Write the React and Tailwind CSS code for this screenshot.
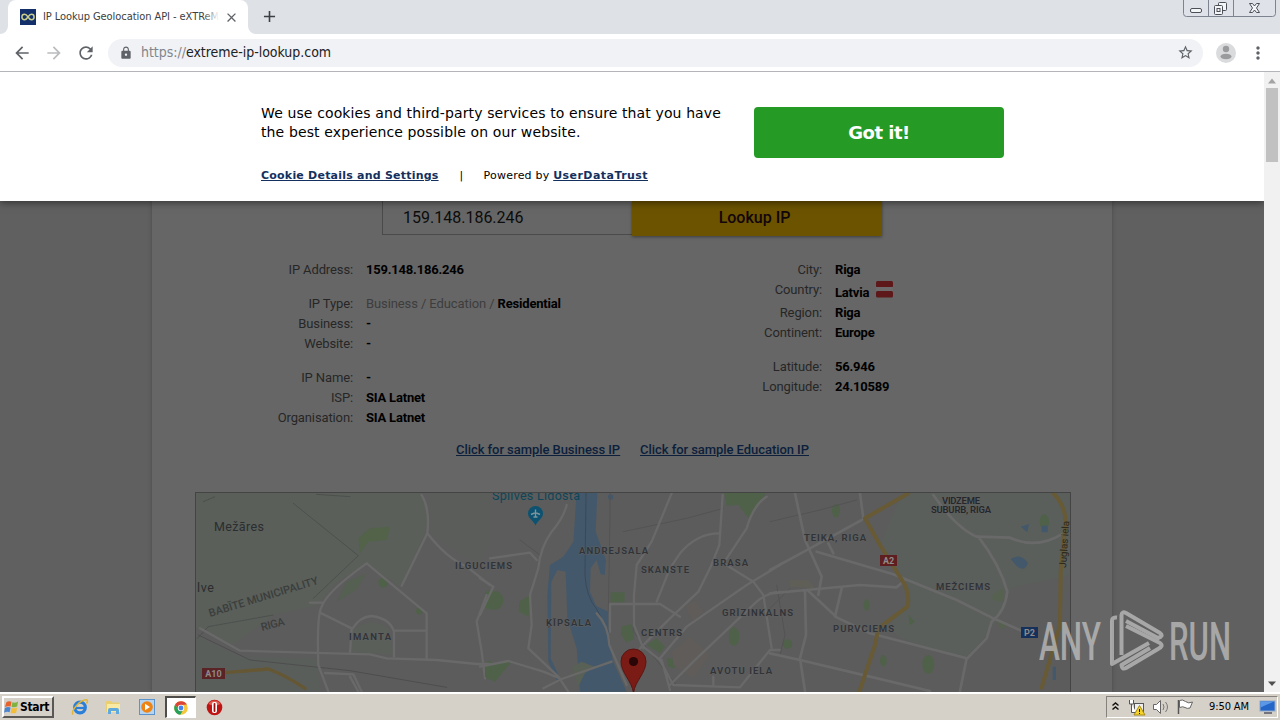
import { MdAdd, MdArrowBack, MdArrowForward, MdClose, MdLock, MdMoreVert, MdRefresh, MdStarBorder } from "react-icons/md"

const leftGroups = [
    [{ label: "IP Address:", value: "159.148.186.246" }],
    [
        { label: "IP Type:", muted: "Business / Education / ", value: "Residential" },
        { label: "Business:", value: "-" },
        { label: "Website:", value: "-" },
    ],
    [
        { label: "IP Name:", value: "-" },
        { label: "ISP:", value: "SIA Latnet" },
        { label: "Organisation:", value: "SIA Latnet" },
    ],
]

const rightGroups = [
    [
        { label: "City:", value: "Riga" },
        { label: "Country:", value: "Latvia", flag: true },
        { label: "Region:", value: "Riga" },
        { label: "Continent:", value: "Europe" },
    ],
    [
        { label: "Latitude:", value: "56.946" },
        { label: "Longitude:", value: "24.10589" },
    ],
]

const WindowControls = () => (
    <svg width="93" height="18" viewBox="1183 0 93 18" fill="none" stroke="#7d838f">
        <path d="M1183.500 0V13.500Q1183.500 16.500 1186.500 16.500H1272.500Q1275.500 16.500 1275.500 13.500V0" fill="#dfe2e8" />
        <path d="M1208.500 0V16M1233.500 0V16" />
        <g stroke="#4b4f58" fill="#f4f5f7">
            <rect x="1190.500" y="8.500" width="11" height="4" rx="1.500" />
            <rect x="1218.500" y="2.500" width="8" height="8" rx="1" />
            <rect x="1214.500" y="5.500" width="8" height="9" rx="1" />
            <rect x="1217" y="8.500" width="3" height="3" />
            <path d="M1249.500 3.500h3l2 2.500 2-2.500h3l-3 4.500 3 4.500h-3l-2-2.500-2 2.500h-3l3-4.500z" />
        </g>
    </svg>
)

const TabStrip = () => (
    <div className="flex h-[34px] items-start justify-between bg-[#dee1e6]">
        <div className="flex h-full items-end">
            <div className="h-2 w-2 bg-white">
                <div className="h-2 w-2 rounded-br-lg bg-[#dee1e6]" />
            </div>
            <div className="flex h-full w-60 items-center rounded-t-lg bg-white pl-3">
                <svg width="16" height="16" viewBox="0 0 16 16">
                    <rect width="16" height="16" fill="#14306b" />
                    <path d="M8 8C6.500 5.700 5.500 5.300 4.600 5.300a2.700 2.700 0 0 0 0 5.400C5.500 10.700 6.500 10.300 8 8s2.500-2.700 3.400-2.700a2.700 2.700 0 0 1 0 5.400C10.500 10.700 9.500 10.300 8 8z" fill="none" stroke="#c9cf8a" strokeWidth="1.500" />
                </svg>
                <div className="relative ml-[7px] w-[176px] overflow-hidden whitespace-nowrap font-['DejaVu_Sans_Condensed','DejaVu_Sans',sans-serif] text-[11px] leading-4 tracking-[-0.06px] text-[#3c4043]">
                    IP Lookup Geolocation API - eXTReM
                    <div className="absolute inset-y-0 right-0 w-4 bg-linear-to-r from-transparent to-white" />
                </div>
                <MdClose className="ml-[5px] size-[15px] text-[#5f6368]" />
            </div>
            <div className="h-2 w-2 bg-white">
                <div className="h-2 w-2 rounded-bl-lg bg-[#dee1e6]" />
            </div>
            <MdAdd className="mb-[8px] ml-[4px] size-[19px] text-[#3c4043]" />
        </div>
        <div className="pr-1">
            <WindowControls />
        </div>
    </div>
)

const Toolbar = () => (
    <div className="flex h-[38px] items-center border-b border-[#b3b5b8] bg-white">
        <MdArrowBack className="ml-3 size-5 text-[#5f6368]" />
        <MdArrowForward className="ml-3 size-5 text-[#babcbe]" />
        <MdRefresh className="ml-3 size-5 text-[#5f6368]" />
        <div className="ml-3 flex h-7 w-[1095px] items-center rounded-full bg-[#f0f2f5] pr-[9px] pl-[11px]">
            <MdLock className="size-[14px] text-[#5f6368]" />
            <div className="ml-2 flex-1 whitespace-nowrap font-['DejaVu_Sans_Condensed','DejaVu_Sans',sans-serif] text-[14px] tracking-[-0.03px] text-[#202124]">
                <span className="text-[#80868b]">https://</span>extreme-ip-lookup.com
            </div>
            <MdStarBorder className="size-[17px] text-[#5f6368]" />
        </div>
        <svg className="ml-[13px]" width="20" height="20" viewBox="0 0 20 20">
            <circle cx="10" cy="10" r="10" fill="#dadbdd" />
            <circle cx="10" cy="6" r="3.200" fill="#9a9b9d" />
            <ellipse cx="10" cy="13.500" rx="5.500" ry="2.800" fill="#9a9b9d" />
        </svg>
        <MdMoreVert className="ml-3 size-5 text-[#5f6368]" />
    </div>
)

const CookieBanner = () => (
    <div className="relative z-10 flex h-[129px] shrink-0 bg-white pl-[261px] font-['DejaVu_Sans',sans-serif] text-black shadow-[0_1px_8px_rgba(0,0,0,0.55)]">
        <div className="w-[493px] whitespace-nowrap pt-8">
            <p className="text-[14px] leading-[19px] tracking-[0.12px]">
                We use cookies and third-party services to ensure that you have
                <br />
                the best experience possible on our website.
            </p>
            <div className="mt-[26px] flex text-[11px] leading-4 tracking-[0.22px]">
                <a className="font-bold text-[#14305e] underline">Cookie Details and Settings</a>
                <span className="ml-[21px]">|</span>
                <span className="ml-5">
                    Powered by <a className="font-bold tracking-[0.45px] text-[#14305e] underline">UserDataTrust</a>
                </span>
            </div>
        </div>
        <button type="button" className="mt-[35px] h-[51px] w-[250px] rounded-[4px] bg-[#259a25] text-[18px] font-bold tracking-[-0.5px] text-white">
            Got it!
        </button>
    </div>
)

const Row = ({ label, value, muted, flag }) => (
    <div className="flex gap-[13px]">
        <span className="w-[93px] text-right tracking-[-0.12px] text-[#262626]">{label}</span>
        <span className="flex whitespace-pre font-bold tracking-[-0.2px] text-black">
            {muted && <span className="font-normal tracking-[-0.1px] text-[#3d3d3d]">{muted}</span>}
            {flag ? <span className="pt-[3px]">{value}</span> : value}
            {flag && (
                <svg className="mt-px ml-[7px]" width="17" height="17" viewBox="0 0 17 17">
                    <rect width="17" height="6.500" rx="1.500" fill="#5e1819" />
                    <rect y="10" width="17" height="6.500" rx="1.500" fill="#5e1819" />
                    <rect y="6" width="17" height="4" fill="#6c6a6a" />
                </svg>
            )}
        </span>
    </div>
)

const Groups = ({ groups }) => (
    <div className="flex flex-col gap-[14px]">
        {groups.map((rows, i) => (
            <div key={i}>
                {rows.map((row) => <Row key={row.label} {...row} />)}
            </div>
        ))}
    </div>
)

// Each tile is drawn at three units per pixel.
const CityMap = () => (
    <svg width="874" height="199" viewBox="196 493 874 199" className="font-['Roboto',sans-serif]">
        <rect x="196" y="493" width="874" height="199" fill="#5c5c5c" />
        <g transform="translate(190 485) scale(.33333)" fill="none" strokeLinecap="round" strokeLinejoin="round">
            <path d="M18 22H690L715 75 705 145 630 305 530 235 430 300 385 360 250 390 130 480 18 430z" fill="#5a5f5a" />
            <path d="M18 450L150 515 380 520 390 620H18z" fill="#5a5e5b" />
            <path d="M720 22H900V180L860 240 715 145z" fill="#5b5d5b" />
            <path d="M505 160l35-30 60-5-10 40-55 5-25 35z" fill="#526349" />
            <path d="M440 350l30-60 60-25-30 50z" fill="#556052" />
            <circle cx="580" cy="293" r="15" fill="#50614a" />
            <circle cx="688" cy="378" r="10" fill="#50614a" />
            <path d="M485 500V440q50-50 110-10l15 80z" fill="#5a5f5a" />
            <ellipse cx="897" cy="345" rx="14" ry="30" fill="#4e6348" />
            <ellipse cx="897" cy="555" rx="14" ry="28" fill="#4e6348" />
            <path d="M310 55L505 212 370 340M22 460L55 425 250 390M40 50L75 35M380 28L480 35" stroke="#464646" strokeWidth="2" strokeDasharray="5 3" />
            <path d="M25 450L180 525 480 557 770 607" stroke="#4d4d4d" strokeWidth="3" />
            <g stroke="#696969" strokeWidth="7">
                <path d="M695 30Q720 70 712 145L635 302M712 145Q770 220 830 245L900 300M890 330L860 410 875 500 885 580" />
                <path d="M530 235Q410 320 395 365 380 390 385 540L415 620M530 235L710 385V522M360 353H397M390 383L485 430 480 505" />
                <path d="M488 430Q510 395 545 393 600 400 612 440V515M615 437H710" />
                <path d="M30 430L150 497 540 508 590 520 740 525 860 537H900M405 564L490 568 515 620M480 575L505 620" />
            </g>
            <path d="M105 563L235 552Q285 570 345 610" stroke="#655733" strokeWidth="10" />
        </g>

        <g transform="translate(480 485) scale(.33333)" fill="none" strokeLinecap="round" strokeLinejoin="round">
            <path d="M290 22H352L347 140 378 225 374 270 362 268 350 225 332 250 330 320 348 362 385 380V430L398 525 440 620H300L290 490 262 400 257 260 232 255 214 290 212 520 245 590 232 590 205 530 202 330 210 240 250 215 280 170z" fill="#43586b" />
            <circle cx="392" cy="36" r="8" fill="#43586b" />
            <path d="M318 22L315 270Q318 335 350 372L385 440" stroke="#39495a" strokeWidth="3" />
            <g fill="#4f6149">
                <path d="M732 22H860L805 98 775 60 740 62z" />
                <ellipse cx="45" cy="346" rx="25" ry="28" />
                <path d="M118 350l32-20-4 65-30-15z" />
                <path d="M392 322h42v30h-42z" />
                <path d="M425 425l30-8 8 45-25 10-15-25z" />
                <path d="M500 480l30-20 25 25-15 20z" />
                <path d="M560 520h25v30l-20-5z" />
                <path d="M15 540l80-10-50 60-30-15z" />
                <ellipse cx="762" cy="455" rx="16" ry="28" />
                <path d="M275 545l30-15 40 15-30 20-20 40z" fill="#596055" />
            </g>
            <path d="M575 500l55-45 60 55-50 70-60-40z" fill="#5f5c59" />
            <path d="M615 365l30-20 25 35-30 30z" fill="#5f5c5a" />
            <path d="M390 22V100L385 380M430 140L620 100 730 70M120 165L180 210M460 400V440L590 600" stroke="#535353" strokeWidth="3" />
            <g stroke="#696969" strokeWidth="7">
                <path d="M260 60Q250 100 215 140 180 190 175 250L150 330 155 420 145 490 235 575 265 620M30 220L150 203 170 225M0 280L40 305 0 390M0 545L85 528 190 560 240 580" />
                <path d="M190 610L245 582 395 530M350 385Q385 420 388 480L440 600M390 440V357H540L600 395" />
                <path d="M575 25L515 170 470 240 462 330V420L490 490M728 30L718 180 690 250 655 320 570 400 480 490" />
                <path d="M718 145Q650 145 600 205L570 250 530 350M860 35Q820 60 800 130L730 235 820 290 850 330 875 490M900 240L800 300 620 425 540 520" />
                <path d="M900 320Q860 325 830 350L640 530 570 600M490 485L540 525 580 600 780 607 870 495H900M545 525L570 615M700 575V605" />
            </g>
        </g>

        <g transform="translate(770 485) scale(.33333)" fill="none" strokeLinecap="round" strokeLinejoin="round">
            <path d="M415 22H903V270L720 310 700 380 650 450 590 520 420 470 345 430 412 365 405 300 370 240 330 180 380 60z" fill="#5a5f5b" />
            <g fill="#4f6149">
                <ellipse cx="198" cy="77" rx="12" ry="20" />
                <ellipse cx="823" cy="110" rx="14" ry="22" />
                <ellipse cx="290" cy="360" rx="9" ry="17" />
                <path d="M415 390l20 20-15 10z" />
                <ellipse cx="475" cy="538" rx="18" ry="28" />
                <ellipse cx="340" cy="527" rx="10" ry="17" />
                <circle cx="53" cy="477" r="14" />
                <path d="M668 330l30-20 5 40-35-5zM675 400l45 15-25 20z" fill="#56624f" />
            </g>
            <path d="M722 222q30-20 52 12-10 30-35 8zM752 125l25-8-5 25zM815 122h18v20h-18zM848 545h10v40h-10z" fill="#43586b" />
            <path d="M60 285h55l20 25-75-5z" fill="#605f57" />
            <path d="M0 110L150 75 260 45M20 300L45 450 30 510M0 370L60 310" stroke="#535353" strokeWidth="3" />
            <g stroke="#696969" strokeWidth="8">
                <path d="M75 25L105 165 155 275 145 330M0 255L120 190 275 105M270 25L280 100M140 200L370 268 560 345 670 400 760 440M175 175L190 205" />
                <path d="M0 325L110 315 270 300 380 307 405 285M105 320L108 450 90 520 105 618M112 315L200 397 300 445 590 520 570 618M215 310L195 395" />
                <path d="M0 505L90 525 300 575 480 618M490 30Q560 130 620 155L720 158Q800 195 880 145M625 155Q690 240 712 320 705 380 665 410L650 460 592 520" />
            </g>
            <path d="M415 25L285 100 330 180 405 300Q420 340 412 365L325 430 315 480 268 620" stroke="#675a35" strokeWidth="12" />
            <path d="M850 25Q885 60 887 110L872 260 870 420 815 608" stroke="#675a35" strokeWidth="12" />
        </g>

        <g fontSize="9.500" fontWeight="600" fill="#303338" stroke="#606060" strokeWidth="1" paintOrder="stroke">
            <text x="455" y="569" textLength="57">ILGUCIEMS</text>
            <text x="349" y="639.500" textLength="42">IMANTA</text>
            <text x="579" y="554" textLength="69">ANDREJSALA</text>
            <text x="641" y="573" textLength="48">SKANSTE</text>
            <text x="713" y="566" textLength="35">BRASA</text>
            <text x="722" y="616" textLength="71">GRĪZINKALNS</text>
            <text x="546" y="625.500" textLength="45">ĶĪPSALA</text>
            <text x="641" y="636" textLength="41">CENTRS</text>
            <text x="710" y="674" textLength="62">AVOTU IELA</text>
            <text x="804" y="541" textLength="62">TEIKA, RIGA</text>
            <text x="833" y="632" textLength="61">PURVCIEMS</text>
            <text x="936" y="590" textLength="54">MEŽCIEMS</text>
            <text x="942" y="504" textLength="38" fill="#25272b">VIDZEME</text>
            <text x="931" y="513" textLength="60" fill="#25272b">SUBURB, RIGA</text>
        </g>
        <g fill="#2b2d2f" fontSize="12.500">
            <text x="214" y="531" textLength="50">Mežāres</text>
            <text x="197" y="592" textLength="17">lve</text>
            <text x="492" y="499.500" fill="#0d4658" textLength="88">Spilves Lidosta</text>
            <text transform="translate(210 617) rotate(-17)" fontSize="11" fill="#3b3e3c" fontWeight="500" textLength="114">BABĪTE MUNICIPALITY</text>
            <text transform="translate(262 631) rotate(-15)" fontSize="11" fill="#3b3e3c" fontWeight="500" textLength="24">RIGA</text>
            <text transform="translate(1066 568) rotate(-86)" fontSize="10" fill="#2c281c" textLength="47">Juglas iela</text>
        </g>
        <g fontSize="9" fontWeight="700" fill="#8f8a8a" textAnchor="middle">
            <rect x="202" y="668" width="23" height="11" fill="#5a2426" />
            <text x="213.500" y="677">A10</text>
            <rect x="880" y="555" width="17" height="11" fill="#5f1f20" />
            <text x="888.500" y="564">A2</text>
            <rect x="1021" y="627" width="17" height="11" fill="#15305a" />
            <text x="1029.500" y="636">P2</text>
        </g>
        <path d="M535.500 525.500C533 520 528 518.500 528 513.500a7.500 7.500 0 0 1 15 0C543 518.500 538 520 535.500 525.500z" fill="#0d5270" />
        <path d="M535.500 509.500v8M531 514.500l4.500-2 4.500 2M533.500 517h4" stroke="#7d959e" strokeWidth="1.400" fill="none" />
        <path d="M633.500 693C632 681 621 673 621 661.500a12.500 12.500 0 0 1 25 0C646 673 635 681 633.500 693z" fill="#7b1b16" stroke="#5c1411" />
        <circle cx="633.500" cy="661.500" r="4.600" fill="#2a0706" />
    </svg>
)

const Watermark = () => (
    <svg className="absolute top-[536px] left-[1034px] z-20 opacity-70" width="202" height="68" viewBox="1034 608 202 68" fill="#c6c6c6">
        <text x="1039" y="660" fontSize="53" fontWeight="500" textLength="62" lengthAdjust="spacingAndGlyphs" className="font-['Roboto',sans-serif]">ANY</text>
        <text x="1169" y="660" fontSize="53" fontWeight="500" textLength="62" lengthAdjust="spacingAndGlyphs" className="font-['Roboto',sans-serif]">RUN</text>
        <g fill="none" stroke="#c6c6c6" strokeWidth="4" strokeLinejoin="round" strokeLinecap="butt">
            <path d="M1117 617.500Q1112 617 1112 621V664L1149 643" />
            <path d="M1121.500 655V615Q1122 611 1126 613L1160 633Q1164 636 1158 638L1126 621" />
            <path d="M1126 626L1160 643Q1164 646 1158 649L1126 668Q1122 670 1121.500 665L1150 648" />
        </g>
    </svg>
)

const PageContent = () => (
    <div className="flex min-h-0 flex-1 justify-center bg-[#606060] font-['Roboto',sans-serif]">
        <div className="flex w-[960px] flex-col items-center overflow-hidden bg-[#666] shadow-[0_0_4px_rgba(0,0,0,0.25)]">
            <div className="flex h-[35px] w-[500px] shrink-0 text-[16px] leading-[34px]">
                <div className="h-[34px] w-[250px] border-b border-l border-[#4a4a4a] pl-5 text-[#0c0c0c]">159.148.186.246</div>
                <div className="flex-1 bg-[#6b5300] pr-[5px] text-center font-medium text-[#12060c] shadow-[0_1px_3px_rgba(0,0,0,0.4)]">Lookup IP</div>
            </div>
            <div className="mt-6 flex h-[158px] w-full shrink-0 pl-[108px] text-[13px] leading-5">
                <div className="w-[469px]">
                    <Groups groups={leftGroups} />
                </div>
                <Groups groups={rightGroups} />
            </div>
            <div className="mt-[22px] flex w-full shrink-0 gap-5 pl-[304px] text-[13px] leading-5 font-medium tracking-[-0.06px] text-[#0c1f3c] underline">
                <a>Click for sample Business IP</a>
                <a>Click for sample Education IP</a>
            </div>
            <div className="mt-8 ml-[2px] w-[876px] shrink-0 border border-[#444]">
                <CityMap />
            </div>
        </div>
    </div>
)

const Scrollbar = () => (
    <div className="flex w-4 flex-col items-center justify-between bg-[#f1f1f1]">
        <div className="flex flex-col items-center">
            <svg width="16" height="16"><path d="M4 11.500L8 6.500l4 5z" fill="#a3a3a3" /></svg>
            <div className="h-[74px] w-3 bg-[#c1c1c1]" />
        </div>
        <svg width="16" height="16"><path d="M4 5.500h8l-4 4.500z" fill="#505050" /></svg>
    </div>
)

const StartLogo = () => (
    <svg className="shrink-0" width="15" height="16" viewBox="0 0 16 16">
        <path d="M2.500 3Q5 1 8 2.500L7 7.500Q4 6.500 1 8z" fill="#e8622c" />
        <path d="M9 3Q12 4 15 2L14 7.500Q11 9 8 7.800z" fill="#7fb240" />
        <path d="M1 9Q4 7.500 7 8.500L6 13.500Q3 12.500 0 14z" fill="#4a86cf" />
        <path d="M8 9Q11 10 14 8.500L13 14Q10 15.500 7 14z" fill="#f3bd3a" />
    </svg>
)

const Taskbar = () => (
    <div className="flex h-7 items-start border-t-2 border-white bg-[#d5d0c8] pt-[2px] font-['DejaVu_Sans_Condensed','DejaVu_Sans',sans-serif] text-black">
        <div className="ml-[2px] flex h-[22px] w-[52px] items-center border-2 border-t-white border-r-[#5a5855] border-b-[#5a5855] border-l-white text-[12px] font-bold">
            <StartLogo />
            <span className="ml-px tracking-[-0.3px]">Start</span>
        </div>
        <div className="flex h-[22px] items-center">
            <svg className="ml-[17px]" width="18" height="18" viewBox="0 0 18 18" fill="none">
                <circle cx="9" cy="9.500" r="5.300" stroke="#2a7fd8" strokeWidth="3.200" />
                <path d="M5 10h9" stroke="#2a7fd8" strokeWidth="2.200" />
                <path d="M2 16.500C-.5 13 9 1.500 15.500 1.800q2 .7 0 3.700" stroke="#e2b634" strokeWidth="1.500" />
            </svg>
            <svg className="ml-[15px]" width="18" height="18" viewBox="0 0 18 18">
                <path d="M2 3h5l1 1.500h7V14H2z" fill="#e9cf70" />
                <path d="M3 6h13v8H3z" fill="#f8e9a4" />
                <path d="M4 16v-4q0-2 2-2h7q2 0 2 2v4h-3v-3H7v3z" fill="#5fa9dd" />
            </svg>
            <svg className="ml-4" width="18" height="18" viewBox="0 0 18 18">
                <rect x="1.500" y="1.500" width="15" height="15" fill="#b6d3f0" stroke="#5b93cd" />
                <circle cx="9" cy="9" r="5.800" fill="#ee8413" />
                <path d="M7 5.800l5 3.200-5 3.200z" fill="#fff" />
            </svg>
            <div className="ml-[9px] flex h-[22px] w-[31px] items-center justify-center border border-t-2 border-l-2 border-t-[#4f4d4a] border-r-white border-b-white border-l-[#4f4d4a] bg-white">
                <svg width="14" height="14" viewBox="0 0 14 14">
                    <circle cx="7" cy="7" r="6.800" fill="#f6c73c" />
                    <path d="M1.100 3.600A6.800 6.800 0 0 1 12.900 3.600L7 4 4.300 8.600z" fill="#db4537" />
                    <path d="M1.100 3.600A6.800 6.800 0 0 0 6.300 13.800L9.500 8.500 4.300 8.600z" fill="#27a05a" />
                    <circle cx="7" cy="7" r="3.200" fill="#fff" />
                    <circle cx="7" cy="7" r="2.400" fill="#4484ee" />
                </svg>
            </div>
            <svg className="ml-[10px]" width="17" height="17" viewBox="0 0 17 17">
                <circle cx="8.500" cy="8.500" r="7.800" fill="#be1414" />
                <path d="M2.500 5a7 7 0 0 1 12 0q-6 3-12 0z" fill="#de5c50" />
                <rect x="6" y="3" width="5" height="11" rx="2" fill="#fff" />
                <rect x="7.600" y="4" width="1.800" height="9" rx=".8" fill="#a01010" />
            </svg>
        </div>
        <div className="mr-[2px] ml-auto flex h-[22px] w-[172px] items-center border border-t-[#85827d] border-r-white border-b-white border-l-[#85827d]">
            <svg width="92" height="20" viewBox="1107 697 92 20" fill="none" stroke="#111">
                <path d="M1112.500 705.500l3-2.500 3 2.500M1112.500 709.500l3-2.500 3 2.500" strokeWidth="1.500" />
                <g stroke="#555">
                    <rect x="1134.500" y="703.500" width="9" height="8" fill="#eee" />
                    <path d="M1129.500 700v4h4v-4M1131.500 704v8.500h5" fill="#fff" />
                </g>
                <path d="M1139.500 705.500l5.500 9.500h-11z" fill="#f4d32c" stroke="#a58c18" />
                <path d="M1139.500 709v3M1139.500 713v1" />
                <path d="M1153.500 704.500h3l4-4v13l-4-4h-3z" fill="#fff" stroke="#666" />
                <path d="M1163 704q2 3 0 6M1165.500 702q4 5 0 10" stroke="#777" />
                <path d="M1178.500 700v14" stroke="#555" strokeWidth="1.500" />
                <path d="M1179.500 700.500q3-1.500 6 1t7 .500l-2.500 6q-3 1-5-.500t-5.500 0z" fill="#fff" stroke="#666" />
            </svg>
            <span className="ml-[10px] whitespace-nowrap text-[11px] tracking-[-0.1px]">9:50 AM</span>
            <svg className="mr-px ml-auto" width="17" height="16" viewBox="0 0 17 16">
                <rect x="1" y="2" width="15" height="10" fill="#2465c8" stroke="#8fa9ca" />
                <path d="M1.500 2.500h14q-6 2-14 6z" fill="#5b98e6" />
                <path d="M5 14h8" stroke="#556" strokeWidth="1.500" />
            </svg>
        </div>
    </div>
)

const App = () => {
    return (
        <div className="flex h-[720px] w-[1280px] flex-col overflow-hidden bg-white">
            <TabStrip />
            <Toolbar />
            <div className="relative flex min-h-0 flex-1">
                <div className="flex min-w-0 flex-1 flex-col overflow-hidden">
                    <CookieBanner />
                    <PageContent />
                </div>
                <Scrollbar />
                <Watermark />
            </div>
            <Taskbar />
        </div>
    )
}

export default App
